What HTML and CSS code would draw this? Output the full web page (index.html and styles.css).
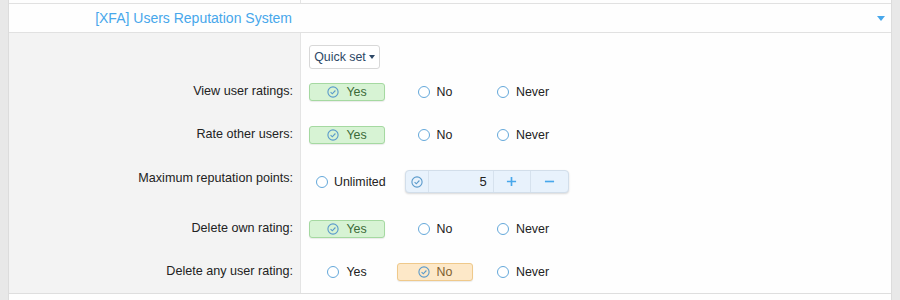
FILE: index.html
```html
<!DOCTYPE html>
<html lang="en">
<head>
    <meta charset="UTF-8">
    <title>Users Reputation System options</title>
    <link rel="stylesheet" href="styles.css">
</head>
<body>
    <div class="block">
        <div class="prev-row">
            <div class="prev-label"></div>
        </div>

        <div class="section-header">
            <h3 class="section-title">[XFA] Users Reputation System</h3>
            <span class="header-caret"></span>
        </div>

        <div class="section-body">
            <div class="form-row quick-row">
                <div class="row-label"></div>
                <div class="row-field">
                    <button class="quick-set">Quick set <span class="small-caret"></span></button>
                </div>
            </div>

            <div class="form-row">
                <div class="row-label">View user ratings:</div>
                <div class="row-field">
                    <label class="choice selected-yes"><svg class="check" viewBox="0 0 12 12"><circle cx="6" cy="6" r="5.1"/><path d="M3.6 6.1 L5.3 7.8 L8.4 4.5"/></svg>Yes</label>
                    <label class="choice"><span class="radio"></span>No</label>
                    <label class="choice"><span class="radio"></span>Never</label>
                </div>
            </div>

            <div class="form-row">
                <div class="row-label">Rate other users:</div>
                <div class="row-field">
                    <label class="choice selected-yes"><svg class="check" viewBox="0 0 12 12"><circle cx="6" cy="6" r="5.1"/><path d="M3.6 6.1 L5.3 7.8 L8.4 4.5"/></svg>Yes</label>
                    <label class="choice"><span class="radio"></span>No</label>
                    <label class="choice"><span class="radio"></span>Never</label>
                </div>
            </div>

            <div class="form-row tall-row">
                <div class="row-label">Maximum reputation points:</div>
                <div class="row-field">
                    <label class="choice auto-width"><span class="radio"></span>Unlimited</label>
                    <div class="number-group">
                        <span class="number-check"><svg class="check" viewBox="0 0 12 12"><circle cx="6" cy="6" r="5.1"/><path d="M3.6 6.1 L5.3 7.8 L8.4 4.5"/></svg></span>
                        <input class="number-input" type="text" value="5">
                        <span class="number-btn"><svg viewBox="0 0 12 12"><path d="M6 1 V11 M1 6 H11"/></svg></span>
                        <span class="number-btn"><svg viewBox="0 0 12 12"><path d="M1 6 H11"/></svg></span>
                    </div>
                </div>
            </div>

            <div class="form-row">
                <div class="row-label">Delete own rating:</div>
                <div class="row-field">
                    <label class="choice selected-yes"><svg class="check" viewBox="0 0 12 12"><circle cx="6" cy="6" r="5.1"/><path d="M3.6 6.1 L5.3 7.8 L8.4 4.5"/></svg>Yes</label>
                    <label class="choice"><span class="radio"></span>No</label>
                    <label class="choice"><span class="radio"></span>Never</label>
                </div>
            </div>

            <div class="form-row">
                <div class="row-label">Delete any user rating:</div>
                <div class="row-field">
                    <label class="choice"><span class="radio"></span>Yes</label>
                    <label class="choice selected-no"><svg class="check" viewBox="0 0 12 12"><circle cx="6" cy="6" r="5.1"/><path d="M3.6 6.1 L5.3 7.8 L8.4 4.5"/></svg>No</label>
                    <label class="choice"><span class="radio"></span>Never</label>
                </div>
            </div>
        </div>
    </div>
</body>
</html>
```

FILE: styles.css
```css
body {
    font-family: 'Liberation Sans', Arial, sans-serif;
    margin: 0;
    background-color: #e8e8e8;
    color: #222;
    font-size: 12px;
}

.block {
    margin: 0 8px;
    background: #fefefe;
    border-left: 1px solid #dcdcdc;
    border-right: 1px solid #dcdcdc;
    min-height: 300px;
}

.prev-row {
    height: 3px;
    border-bottom: 1px solid #e1e1e1;
    display: flex;
}

.prev-label {
    width: 291px;
    border-right: 1px solid #e4e4e4;
}

.section-header {
    height: 28px;
    display: flex;
    align-items: center;
    border-bottom: 1px solid #e1e1e1;
}

.section-title {
    width: 283px;
    margin: 0;
    padding-right: 8px;
    text-align: right;
    font-size: 14px;
    font-weight: normal;
    color: #47a7eb;
}

.header-caret {
    margin-left: auto;
    margin-right: 6px;
    width: 0;
    height: 0;
    border-left: 4px solid transparent;
    border-right: 4px solid transparent;
    border-top: 5px solid #47a7eb;
}

.section-body {
    border-bottom: 1px solid #dedede;
    background: linear-gradient(to right, #f3f3f3 291px, #e4e4e4 291px, #e4e4e4 292px, transparent 292px);
}

.form-row {
    display: flex;
    align-items: center;
    height: 43px;
}

.quick-row {
    height: 24.5px;
    padding-top: 12px;
    align-items: flex-start;
}

.tall-row {
    height: 51px;
    align-items: flex-start;
}

.row-label {
    width: 284px;
    padding-right: 8px;
    text-align: right;
    font-size: 12.6px;
    color: #222;
    flex-shrink: 0;
}

.tall-row .row-label {
    padding-top: 15px;
}

.row-field {
    padding-left: 8px;
    display: flex;
    align-items: center;
    gap: 12px;
    font-size: 12.4px;
}

.tall-row .row-field {
    height: 100%;
    padding-top: 1px;
    box-sizing: border-box;
}

.quick-set {
    font-family: inherit;
    font-size: 12.4px;
    color: #2d4866;
    background: #fff;
    border: 1px solid #d8d8d8;
    border-radius: 3px;
    height: 24px;
    width: 71px;
    padding: 0;
    display: flex;
    align-items: center;
    justify-content: center;
    gap: 3px;
}

.small-caret {
    width: 0;
    height: 0;
    border-left: 3px solid transparent;
    border-right: 3px solid transparent;
    border-top: 4px solid #2d4866;
}

.choice {
    width: 76px;
    height: 18px;
    box-sizing: border-box;
    border: 1px solid transparent;
    border-radius: 3px;
    display: flex;
    align-items: center;
    justify-content: center;
    gap: 7px;
    color: #222;
    margin-top: 1px;
}

.choice.auto-width {
    width: auto;
    padding: 0 6px 0 6px;
    gap: 6px;
    margin-top: 0;
}

.selected-yes {
    background: #d7f3d4;
    border-color: #a5d9a1;
    color: #3b6a38;
    box-shadow: 0 1px 1px rgba(0, 0, 0, 0.08);
}

.selected-no {
    background: #fde8c8;
    border-color: #efc98b;
    color: #7f5f2f;
    box-shadow: 0 1px 1px rgba(0, 0, 0, 0.08);
}

.radio {
    width: 12px;
    height: 12px;
    box-sizing: border-box;
    border: 1.3px solid #64a8da;
    border-radius: 50%;
    background: #fff;
}

.check {
    width: 12px;
    height: 12px;
    fill: none;
    stroke: #5a9acb;
    stroke-width: 1.1;
}

.number-group {
    display: flex;
    height: 23px;
    box-sizing: border-box;
    border: 1px solid #d2deea;
    border-radius: 4px;
    background: #e8f2fc;
    box-shadow: 0 1px 2px rgba(0, 0, 0, 0.15);
}

.number-check {
    width: 22px;
    display: flex;
    align-items: center;
    justify-content: center;
    border-right: 1px solid #d6e2ee;
}

.number-input {
    width: 65px;
    box-sizing: border-box;
    border: none;
    border-right: 1px solid #d6e2ee;
    background: transparent;
    text-align: right;
    padding: 0 6px 0 0;
    font-family: inherit;
    font-size: 13px;
    color: #222;
}

.number-btn {
    width: 36px;
    display: flex;
    align-items: center;
    justify-content: center;
}

.number-btn + .number-btn {
    border-left: 1px solid #d6e2ee;
    width: 37px;
}

.number-btn svg {
    width: 11px;
    height: 11px;
    fill: none;
    stroke: #47a7eb;
    stroke-width: 1.8;
}
```
